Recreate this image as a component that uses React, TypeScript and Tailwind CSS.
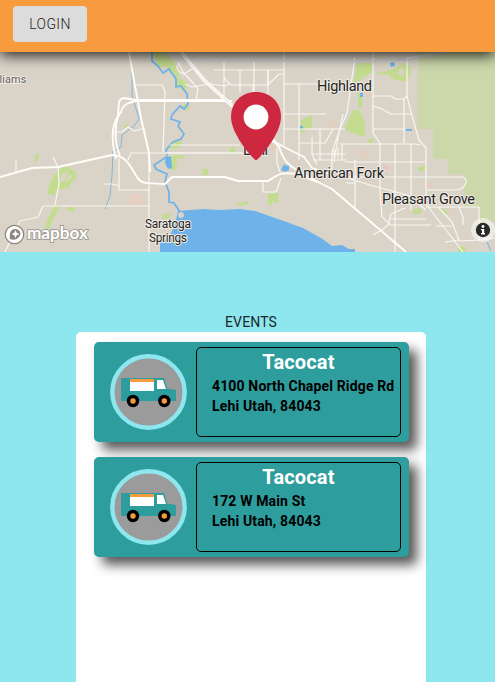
import React from "react";

const majorRoads = [
  "M129 52 L135 86 L141 118 L149 153 L150 172",
  "M116 159 C111 140 112 125 118 116 C119 102 118 99 124 98 L142 101 L232 101",
  "M120 156 C113 140 115 119 121 112 C123 104 128 102 142 100 L224 100",
  "M0 177 L32 168 L58 167 L112 155 C126 156 129 164 137 177 C141 184 145 183 165 184 L172 177 L225 177 L238 181 L268 181 C279 174 280 172 296 174 L318 182 L332 189 L406 252",
  "M272 139 L279 147 C285 164 290 166 300 172 L315 180",
];

const minorRoads = [
  "M58 167 L59 184 L55 205 M16 172 V159 M58 167 L53 157",
  "M43 206 H150 M43 206 L38 217 L20 221 L5 252",
  "M136 85 H162 L165 91 L163 152 M149 153 V252",
  "M119 159 V190 H150 M103 184 L112 184 L119 186",
  "M116 132 H122 L128 127 L134 131 L145 128",
  "M128 160 L131 153 H242 M178 62 L183 72 L193 83 L198 89 L196 101",
  "M180 64 C174 65 177 72 184 74 L195 67 M185 84 L192 87 L210 84 L225 86 L230 84",
  "M214 70 H284 M254 60 V92 M224 60 V101 M240 70 V92 M268 70 V103",
  "M224 78 L231 85 H268 L279 74 H284 M284 62 V145 M284 114 H326 M284 129 H345",
  "M299 84 V160 M284 84 H299 L345 84 M253 85 V101 M268 70 V85",
  "M170 145 H240 M165 153 H257 M263 182 V192 H276 L281 178",
  "M277 148 V163 L280 172 M312 137 V154 L317 165",
  "M284 52 V62 M355 57 L347 113 L340 129 L332 152 V170",
  "M373 52 V133 L380 143 V194 L382 217 L391 225 H431",
  "M373 96 L391 96 L395 99 H404 L407 96 V58 L415 57 L447 52 M407 96 L412 116 L419 140 L426 148 V204 L463 252",
  "M373 106 L382 109 L391 114 H411 M373 129 H404 M404 98 V143",
  "M299 143 H325 L333 129 M320 129 V160 M343 114 L337 143 L334 162",
  "M340 144 H414 L421 145 M312 154 H346 M313 160 H347 M334 149 V158 M338 148 V158 M342 145 V160",
  "M345 162 H425 M346 177 H463 C470 181 464 190 455 190 H427",
  "M395 144 V252 M411 144 V210 M355 160 V210 M346 183 H355",
  "M426 207 H479 V240 M438 207 L452 222 L459 240 L445 242 M436 226 H452 M459 207 L463 217 V225",
  "M405 208 L391 214 L388 225 L382 230 L373 235 M389 219 H426",
  "M347 178 L370 185 L407 195 L426 210 M459 241 L479 240 L495 238",
];

function Label({ x, y, width, children, size = 14.5 }: {
  x: number; y: number; width: number; children: string; size?: number;
}) {
  return (
    <text x={x} y={y} fontSize={size} textLength={width} fontFamily="Roboto, sans-serif"
      fontWeight="450" fill="#222426" stroke="#eee9e1" strokeWidth="2" strokeLinejoin="round" paintOrder="stroke">
      {children}
    </text>
  );
}

function MapView() {
  return (
    <svg className="block h-[200px] w-[495px] shrink-0" viewBox="0 52 495 200" role="img" aria-label="Map of Lehi">
      <rect y="52" width="495" height="200" fill="#dad4c8" />
      <path d="M418 52 H495 V222 H479 V207 H464 V174 H448 V159 H433 V129 H418Z" fill="#ccd7aa" />
      <g fill="#c4dc90">
        <path d="M152 52 H164 L177 66 L180 79 L187 82 L186 93 L176 85 L173 73 L166 67 H158Z" />
        <path d="M184 104 H189 V109 L185 111 L182 108Z M170 145 L177 140 L182 142 L181 147 L170 149Z M168 156 L185 155 V158 L176 159 L177 168 L171 171Z" />
        <path d="M123 127 L128 123 L128 128Z M202 169 H208 V175 H202Z M230 147 H235 V153 H230Z M35 155 L39 154 L38 160 L34 163Z" />
        <path d="M301 120 L312 115 V127 L305 130 L304 134 L300 131Z M357 62 H373 L372 72 L360 80 L353 86Z M358 93 H362 V107 H358Z" />
        <path d="M352 111 L359 109 L365 123 V136 L357 135 L344 129 L350 117Z M368 140 L373 138 V143 H368Z" />
        <path fillRule="evenodd" d="M374 73 L391 70 L405 63 L411 67 L410 76 L404 82 L390 78 V75Z M399 69 L403 68 L404 76 L398 75Z" />
        <path d="M418 167 L425 166 V171 H418Z M413 209 L421 208 V214 H413Z M438 207 L450 213 L444 214Z M458 246 H465 V252 H458Z" />
        <path fillRule="evenodd" d="M58 170 L65 166 L75 171 L77 178 L71 183 L69 188 L57 190 L54 196 L47 193 L50 183Z M62 174 L59 182 L63 182 L69 171Z M64 183 L73 176 L69 174Z" />
        <path d="M55 206 L61 206 L53 219 L50 229 L45 228 L48 218Z M66 208 L71 206 L75 210 L70 212Z" />
        <path d="M236 204 L248 201 V204 L237 206Z M268 194 L278 193 L278 202 L275 204 L272 199 V205 H268Z M162 214 H170 V219 H162Z" />
      </g>
      <g fill="#e6cdbf" opacity=".8">
        <path d="M129 194 H142 V205 H128Z M330 123 L337 121 V127 L330 129Z M365 91 L373 90 V96 H365Z M359 151 L367 149 V158 L361 159Z M239 155 H243 V161 H239Z M270 139 H276 V152 H270Z M427 182 H432 V190 H427Z M449 209 H455 V213 H449Z" />
        <path fill="#edbfc0" d="M382 166 H388 V170 H382Z" />
      </g>
      <path fill="#6fb2e9" d="M160 252 V243 L169 238 L175 224 L178 211 L204 209 L218 210 L240 209 L255 211 L278 219 L303 228 L321 238 L332 246 L342 245 L349 249 L355 249 V252Z" />
      <g fill="none" stroke="#6fb2e9" strokeWidth="1.7">
        <path d="M152 52 V61 L158 66 L163 73 L169 69 L176 79 V87 L181 86 L187 94 L188 104 L184 109 L180 106 L172 115 L171 119 L180 122 L178 126 L184 134 L181 139 L173 142 L166 150 L167 155" />
        <path d="M168 156 L154 165 L156 169 L167 174 L165 182 L169 192 L169 202 L174 203 L180 212" />
        <path stroke="#82b7d9" strokeWidth="1" d="M132 72 L132 95 L139 119 L134 126 L122 135 L121 147 L113 151 L112 175 L110 196 L105 209" />
        <path strokeWidth="1" d="M487 242 L491 251" />
      </g>
      <path fill="#6fb2e9" d="M166 156 L171 157 L172 168 L168 169 L165 163Z M284 164 L286 166 L289 165 V170 L285 172 L281 170Z M390 63 L394 62 L395 66 L391 67Z M398 59 H405 V60 H398Z M360 93 H363 V97 H360Z M406 129 H412 V131 H406Z M300 126 H303 V129 H300Z" />
      <circle cx="181" cy="215" r="3" fill="#d3d4cc" />
      <g fill="none" stroke="#f8f6f0" strokeWidth="1.2" strokeLinejoin="round">
        {minorRoads.map((road) => <path key={road} d={road} />)}
      </g>
      <path d="M190 60 L218 61 H284 L373 62 L407 60 L420 57 L447 52" fill="none" stroke="#d4d3d5" strokeWidth="2" />
      <g fill="none" stroke="#fffefa" strokeWidth="1.9" strokeLinejoin="round">
        {majorRoads.map((road) => <path key={road} d={road} />)}
        <path strokeWidth="3.4" d="M181 52 L204 80 L227 101 L253 125 L275 142" />
        <path strokeWidth="1.6" d="M275 142 L290 150 L304 157 L312 168 L330 174" />
        <path stroke="#dad4c8" strokeWidth=".6" d="M181 52 L204 80 L227 101 L253 125" />
      </g>
      <text x="-0.5" y="83" fontSize="11" textLength="27" fontFamily="Roboto, sans-serif" fill="#64635f" stroke="#eee9e1" strokeWidth="2" paintOrder="stroke">liams</text>
      <Label x={317} y={91} width={55}>Highland</Label>
      <Label x={243} y={155} width={25}>Lehi</Label>
      <Label x={294} y={178} width={90}>American Fork</Label>
      <Label x={382} y={204} width={93}>Pleasant Grove</Label>
      <Label x={145} y={227.5} width={46} size={12}>Saratoga</Label>
      <Label x={149} y={241.5} width={38} size={12}>Springs</Label>
      <path d="M256 160.5 C250 156 231 133 231 117 C231 102 242 92 256 92 C270 92 281 102 281 117 C281 133 262 156 256 160.5Z" fill="#ce2840" />
      <circle cx="256" cy="117" r="12.4" fill="#fff" />
      <g>
        <circle cx="14.5" cy="234.5" r="9.2" fill="#fff" stroke="#8b867f" strokeWidth="1.2" />
        <path d="M10 239 C9 232 11 229 16 229 C21 230 22 235 18 238 C16 240 13 240 10 239Z" fill="#8b867f" />
        <path d="M15.5 230 L16.7 232.8 L19.5 234 L16.7 235.2 L15.5 238 L14.3 235.2 L11.5 234 L14.3 232.8Z" fill="white" />
        <text x="27" y="239" fontFamily="Lato, sans-serif" fontWeight="700" fontSize="17" textLength="61" lengthAdjust="spacingAndGlyphs" fill="white" stroke="#a19c94" strokeWidth="2" strokeLinejoin="round" paintOrder="stroke">mapbox</text>
      </g>
      <circle cx="483" cy="230" r="12" fill="#fff" opacity=".5" />
      <circle cx="483" cy="230" r="7.2" fill="#292929" />
      <circle cx="483" cy="226.5" r="1.4" fill="#fff" />
      <path d="M481 229 H484.2 V233 H485 V234.5 H481 V233 H482 V230.3 H481Z" fill="#fff" />
    </svg>
  );
}

function Truck() {
  return (
    <svg className="ml-4 h-[76px] w-[77px] shrink-0" viewBox="0 0 77 76" aria-label="Food truck">
      <ellipse cx="38.5" cy="38" rx="36.2" ry="35.7" fill="#9b9b9b" stroke="#8ee6ee" strokeWidth="4.4" />
      <path d="M11 24 H54 L57 34.5 L66 36 V47 H11Z" fill="#2d9d9d" />
      <path d="M20 25 H44 V37 H20Z M47 26 H53 L56 35 H47Z" fill="#fff" />
      <path d="M20 25 H44 V28 H20Z" fill="#f79b3e" />
      <circle cx="23" cy="47" r="6.2" />
      <circle cx="54.3" cy="47" r="6.2" />
      <circle cx="23" cy="47" r="2.7" fill="#f79b3e" />
      <circle cx="54.3" cy="47" r="2.7" fill="#f79b3e" />
    </svg>
  );
}

function EventCard({ address }: { address: string }) {
  return (
    <article className="flex h-[100px] w-[315px] shrink-0 items-center rounded-[5px] bg-[#2d9d9d] shadow-[8px_8px_12px_rgba(0,0,0,0.65)]">
      <Truck />
      <div className="ml-[9px] h-[90px] w-[205px] rounded-[5px] border border-black pt-0.5">
        <h2 className="mb-0.5 pl-px text-center text-[20px] leading-6 font-bold tracking-[0.15px] text-white">Tacocat</h2>
        <p className="whitespace-nowrap pl-[15.5px] text-[14px] leading-5 font-bold tracking-[0.15px] text-black">{address}</p>
        <p className="whitespace-nowrap pl-[15.5px] text-[14px] leading-5 font-bold tracking-[0.15px] text-black">Lehi Utah, 84043</p>
      </div>
    </article>
  );
}

export default function App() {
  return (
    <main className="flex h-[682px] w-[495px] flex-col overflow-hidden bg-[#8ee6ee] font-['Roboto',sans-serif]">
      <header className="relative z-10 h-[52px] shrink-0 bg-[#f89b3e] pt-1.5 pl-[13px] shadow-[0_3px_14px_rgba(0,0,0,0.9)]">
        <button className="h-9 w-[74px] rounded-[4px] bg-[#dcdcdc] text-[14px] font-light tracking-[0.4px] text-[#222]">LOGIN</button>
      </header>
      <MapView />
      <h1 className="mt-[60px] ml-[7px] h-5 text-center text-[14px] leading-5 font-normal tracking-[0.14px] text-[#18292b]">EVENTS</h1>
      <section className="ml-[76px] flex w-[350px] flex-1 flex-col items-center gap-[15px] rounded-t-[5px] bg-white pt-2.5">
        <EventCard address="4100 North Chapel Ridge Rd" />
        <EventCard address="172 W Main St" />
      </section>
    </main>
  );
}
